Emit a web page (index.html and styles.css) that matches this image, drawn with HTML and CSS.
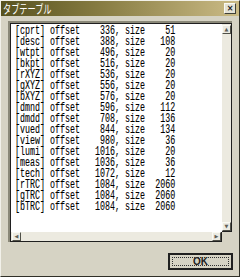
FILE: index.html
```html
<!DOCTYPE html>
<html lang="ja">
<head>
  <meta charset="UTF-8" />
  <title>タブテーブル</title>
  <link rel="stylesheet" href="styles.css">
</head>
<body>

<div class="window">
  <div class="titlebar">
    <span class="title">タブテーブル</span>
    <span class="close">×</span>
  </div>

  <!-- タグ一覧 -->
  <div class="listbox">
    <div class="list">
<pre class="rows">[cprt] offset    336, size    51
[desc] offset    388, size   108
[wtpt] offset    496, size    20
[bkpt] offset    516, size    20
[rXYZ] offset    536, size    20
[gXYZ] offset    556, size    20
[bXYZ] offset    576, size    20
[dmnd] offset    596, size   112
[dmdd] offset    708, size   136
[vued] offset    844, size   134
[view] offset    980, size    36
[lumi] offset   1016, size    20
[meas] offset   1036, size    36
[tech] offset   1072, size    12
[rTRC] offset   1084, size  2060
[gTRC] offset   1084, size  2060
[bTRC] offset   1084, size  2060</pre>
    </div>
    <div class="vscroll">
      <span class="sbtn up">▲</span>
      <span class="sbtn down">▼</span>
    </div>
    <div class="hscroll">
      <span class="sbtn left">◀</span>
      <span class="sbtn right">▶</span>
    </div>
  </div>

  <div class="footer">
    <button class="ok">OK</button>
  </div>
</div>

</body>
</html>
```

FILE: styles.css
```css
body { margin: 0; background: #d6d3c4; }
.window { width: 240px; height: 277px; box-sizing: border-box; background: #d6d3c4; border: 1px solid; border-color: #f2f1ea #303028 #303028 #f2f1ea; display: flex; flex-direction: column; font-family: "Noto Sans CJK JP", sans-serif; }
.titlebar { height: 15px; background: linear-gradient(to right, #57521f, #857a40 40%, #cbbb86); display: flex; align-items: center; justify-content: space-between; padding: 0 3px 0 2px; }
.title { color: white; font-size: 12px; line-height: 15px; display: inline-block; transform: scaleX(0.68); transform-origin: left center; white-space: nowrap; }
.close { width: 10px; height: 9px; background: #e4e2d6; border: 1px solid; border-color: #fafaf4 #404038 #404038 #fafaf4; font-family: "DejaVu Sans", sans-serif; font-size: 8px; font-weight: bold; line-height: 9px; text-align: center; color: #202020; }

.listbox { margin: 5px 7px 0 7px; display: grid; grid-template-columns: 212px 10px; grid-template-rows: 209px 10px; border-left: 2px solid; border-top: 2px solid; border-color: #8a8878 #8a8878; }
.list { background: white; border-left: 1px solid #202020; border-top: 1px solid #202020; overflow: hidden; }
.rows { margin: 2px 0 0 4px; font-family: "Liberation Mono", monospace; font-size: 12px; line-height: 11px; color: black; transform: scaleX(0.695); transform-origin: left top; -webkit-text-stroke: 0.1px black; }
.vscroll { background: #eceae0; border-right: 1px solid #202020; border-bottom: 1px solid #202020; border-top: 1px solid #202020; display: flex; flex-direction: column; justify-content: space-between; padding: 1px 0 0 0; }
.hscroll { background: #eceae0; border-right: 1px solid #202020; border-bottom: 1px solid #202020; border-left: 1px solid #202020; display: flex; justify-content: space-between; align-items: center; padding: 0 0 0 1px; }
.sbtn { width: 7px; height: 7px; background: #ecebe2; border: 1px solid; border-color: #fafaf4 #505048 #505048 #fafaf4; font-family: "DejaVu Sans", sans-serif; font-size: 5px; line-height: 7px; text-align: center; color: #606058; }

.footer { flex: 1; display: flex; justify-content: flex-end; align-items: center; padding: 5px 6px 0 0; }
.ok { width: 65px; height: 17px; background: #d6d3c4; border: 2px solid #202020; outline: 1px dotted #303030; outline-offset: -5px; font-family: "Liberation Sans", sans-serif; font-size: 10px; font-weight: bold; color: #202020; padding: 0; }
```
